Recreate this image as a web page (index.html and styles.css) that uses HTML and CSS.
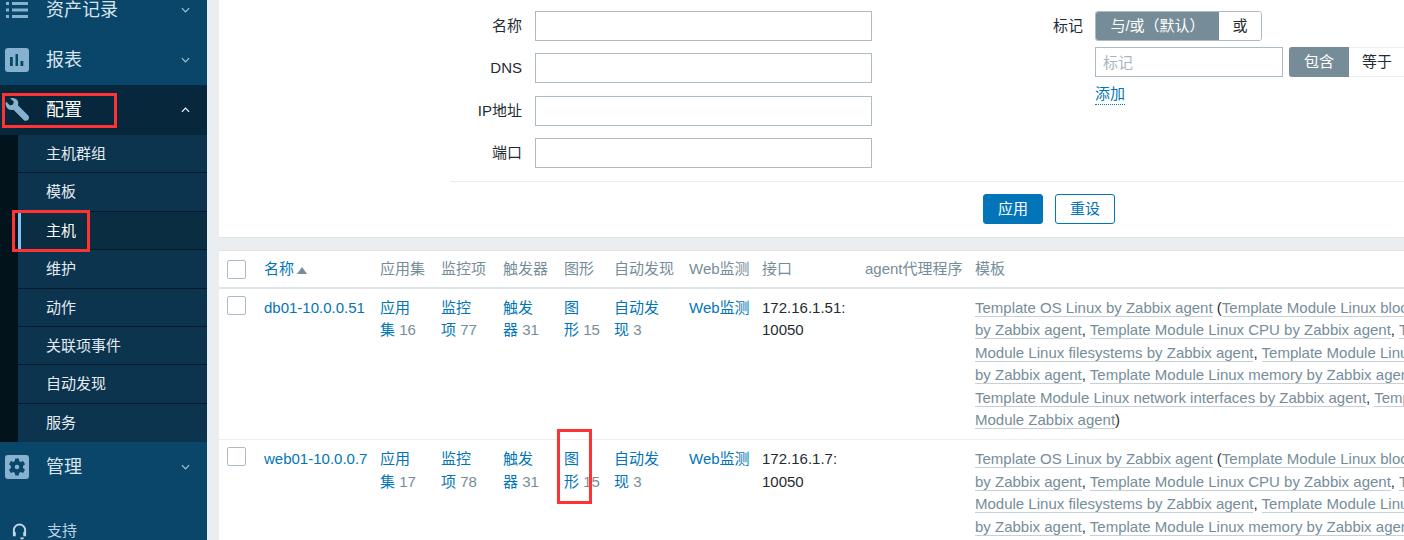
FILE: index.html
```html
<!DOCTYPE html>
<html lang="zh">
<head>
<meta charset="utf-8">
<title>主机</title>
<link rel="stylesheet" href="styles.css">
</head>
<body>
<div class="page">
  <nav class="side">
    <div class="nav-item">
      <svg class="ico" viewBox="0 0 24 24"><path d="M1 4h3v3H1zM1 10.500h3v3H1zM1 17h3v3H1zM7 4h16v3H7zM7 10.500h16v3H7zM7 17h16v3H7z"/></svg>
      <span class="nav-label">资产记录</span>
      <svg class="chev" viewBox="0 0 10 6"><path d="M1 1l4 4 4-4"/></svg>
    </div>
    <div class="nav-item">
      <svg class="ico" viewBox="0 0 24 24"><path fill-rule="evenodd" d="M3 0h18a3 3 0 0 1 3 3v18a3 3 0 0 1-3 3H3a3 3 0 0 1-3-3V3a3 3 0 0 1 3-3zM5 9v9h2.800V9zM10.500 6v12h2.500V6zM15.500 13v5h2.800v-5z"/></svg>
      <span class="nav-label">报表</span>
      <svg class="chev" viewBox="0 0 10 6"><path d="M1 1l4 4 4-4"/></svg>
    </div>
    <div class="nav-item nav-open">
      <svg class="ico" viewBox="0 0 24 24"><path d="M1 3.500 5 7.500 8 6.500 8.800 3.500 5 .5C8-.8 12 .5 13 3.500c.4 1.400.3 2.600-.1 3.700L23 17.300c1.400 1.400 1.200 3.200.2 4.400-1.200 1.300-3.200 1.500-4.500.2L8.500 11.700C6.800 12.400 4.800 12.200 3.200 11 1 9.500.2 6.200 1 3.500z"/></svg>
      <span class="nav-label">配置</span>
      <svg class="chev" viewBox="0 0 10 6"><path d="M1 5l4-4 4 4"/></svg>
    </div>
    <ul class="sub">
      <li>主机群组</li>
      <li>模板</li>
      <li class="sub-on">主机</li>
      <li>维护</li>
      <li>动作</li>
      <li>关联项事件</li>
      <li>自动发现</li>
      <li>服务</li>
    </ul>
    <div class="nav-item">
      <svg class="ico" viewBox="0 0 24 24"><path fill-rule="evenodd" d="M3 0h18a3 3 0 0 1 3 3v18a3 3 0 0 1-3 3H3a3 3 0 0 1-3-3V3a3 3 0 0 1 3-3zM10.300 3.500l-.5 2.600-1.400.8-2.500-.9L4 9.300l2 1.700v2l-2 1.700 1.900 3.300 2.500-.9 1.400.8.5 2.600h3.400l.5-2.600 1.400-.8 2.500.9L20 14.700 18 13v-2l2-1.700-1.900-3.300-2.500.9-1.400-.8-.5-2.600zM12 9.700a2.300 2.300 0 1 1 0 4.600 2.300 2.300 0 0 1 0-4.600z"/></svg>
      <span class="nav-label">管理</span>
      <svg class="chev" viewBox="0 0 10 6"><path d="M1 1l4 4 4-4"/></svg>
    </div>
    <div class="support">
      <svg class="headset" viewBox="0 0 16 18"><path d="M2 11V7.500a6 6 0 0 1 12 0V11"/><path class="solid" d="M1 9.500h3v4.500H1zM12 9.500h3v4.500h-3zM9 15.500h3.500v1.800H9z"/></svg>
      <span>支持</span>
    </div>
  </nav>

  <main class="main">
    <section class="filter">
      <div class="filter-cols">
        <div class="form-grid">
          <label class="f-label">名称</label><input class="f-input" type="text">
          <label class="f-label">DNS</label><input class="f-input" type="text">
          <label class="f-label">IP地址</label><input class="f-input" type="text">
          <label class="f-label">端口</label><input class="f-input" type="text">
        </div>
        <div class="tags">
          <span class="tag-label">标记</span>
          <div class="tag-ctl">
            <div class="seg seg-a"><span class="seg-on">与/或（默认）</span><span class="seg-off">或</span></div>
            <div class="tag-row">
              <input class="tag-input" type="text" placeholder="标记">
              <div class="seg seg-b"><span class="seg-on">包含</span><span class="seg-off">等于</span></div>
            </div>
            <a class="add">添加</a>
          </div>
        </div>
      </div>
      <div class="filter-foot">
        <button class="btn btn-main">应用</button>
        <button class="btn btn-alt">重设</button>
      </div>
    </section>

    <section class="list">
      <table class="hosts">
        <colgroup>
          <col class="c-chk"><col class="c-name"><col class="c-app"><col class="c-item"><col class="c-trg"><col class="c-gr"><col class="c-disc"><col class="c-web"><col class="c-if"><col class="c-proxy"><col class="c-tpl">
        </colgroup>
        <thead>
          <tr>
            <th><span class="chk"></span></th>
            <th><a>名称</a><i class="sort"></i></th>
            <th>应用集</th><th>监控项</th><th>触发器</th><th>图形</th><th>自动发现</th><th>Web监测</th><th>接口</th><th>agent代理程序</th><th>模板</th>
          </tr>
        </thead>
        <tbody>
          <tr>
            <td><span class="chk"></span></td>
            <td><a>db01-10.0.0.51</a></td>
            <td><a>应用集</a>&nbsp;<em>16</em></td>
            <td><a>监控项</a>&nbsp;<em>77</em></td>
            <td><a>触发器</a>&nbsp;<em>31</em></td>
            <td><a>图形</a>&nbsp;<em>15</em></td>
            <td><a>自动发现</a>&nbsp;<em>3</em></td>
            <td><a>Web监测</a></td>
            <td class="plain">172.16.1.51: 10050</td>
            <td></td>
            <td class="tpl"><u>Template OS Linux by Zabbix agent</u> (<u>Template Module Linux block devices</u><br><u>by Zabbix agent</u>, <u>Template Module Linux CPU by Zabbix agent</u>, <u>Template</u><br><u>Module Linux filesystems by Zabbix agent</u>, <u>Template Module Linux generic</u><br><u>by Zabbix agent</u>, <u>Template Module Linux memory by Zabbix agent</u>,<br><u>Template Module Linux network interfaces by Zabbix agent</u>, <u>Template</u><br><u>Module Zabbix agent</u>)</td>
          </tr>
          <tr>
            <td><span class="chk"></span></td>
            <td><a>web01-10.0.0.7</a></td>
            <td><a>应用集</a>&nbsp;<em>17</em></td>
            <td><a>监控项</a>&nbsp;<em>78</em></td>
            <td><a>触发器</a>&nbsp;<em>31</em></td>
            <td><a>图形</a>&nbsp;<em>15</em></td>
            <td><a>自动发现</a>&nbsp;<em>3</em></td>
            <td><a>Web监测</a></td>
            <td class="plain">172.16.1.7: 10050</td>
            <td></td>
            <td class="tpl"><u>Template OS Linux by Zabbix agent</u> (<u>Template Module Linux block devices</u><br><u>by Zabbix agent</u>, <u>Template Module Linux CPU by Zabbix agent</u>, <u>Template</u><br><u>Module Linux filesystems by Zabbix agent</u>, <u>Template Module Linux generic</u><br><u>by Zabbix agent</u>, <u>Template Module Linux memory by Zabbix agent</u>,</td>
          </tr>
        </tbody>
      </table>
    </section>
  </main>
</div>
<div class="mark mark-a"></div>
<div class="mark mark-b"></div>
<div class="mark mark-c"></div>
</body>
</html>
```

FILE: styles.css
```css
* { box-sizing: border-box; }
html, body { margin: 0; height: 540px; overflow: hidden; background: #ebeef0; }
body { position: relative; font: 15px/22.4px "Liberation Sans", "Noto Sans CJK SC", sans-serif; color: #1f2c33; }
.page { display: flex; margin-top: -15px; height: 555px; }

/* sidebar */
.side { flex: 0 0 207px; background: #0a466a; color: #d9e5ed; }
.nav-item { display: flex; align-items: center; height: 50px; padding-left: 5px; position: relative; }
.ico { width: 24px; height: 24px; flex: none; fill: #86b2d0; }
.nav-label { margin-left: 17px; font-size: 18px; }
.chev { position: absolute; left: 181px; top: 22px; width: 9px; height: 6px; fill: none; stroke: #a9c4d6; stroke-width: 1.300; }
.nav-open { background: #07283c; color: #fff; }
.nav-open .chev { stroke: #fff; }
.sub { list-style: none; margin: 0; padding: 0 0 0 18px; background: #0d344f; box-shadow: inset 18px 0 0 #03131c; color: #e3ecf2; }
.sub li { height: 38.375px; line-height: 37px; padding-left: 28px; border-bottom: 1px solid #04192b; }
.sub li:last-child { border-bottom: 0; }
.sub-on { background: #0a2d42; box-shadow: inset 3px 0 0 #7cc6f7; color: #fff; }
.support { display: flex; align-items: center; margin-top: 28px; padding-left: 12px; color: #bcd2e0; }
.support span { margin-left: 20px; }
.headset { width: 15px; height: 17px; fill: none; stroke: #c3d6e3; stroke-width: 2; }
.headset .solid { fill: #c3d6e3; stroke: none; }

/* main */
.main { flex: 0 0 1197px; margin-left: 12px; min-width: 0; overflow: hidden; }
.filter { background: #fff; border-bottom: 1px solid #dfe4e7; padding-top: 26px; height: 253px; }
.filter-cols { display: flex; }
.form-grid { display: grid; grid-template-columns: 303px 337px; column-gap: 13px; row-gap: 12.330px; flex: none; }
.f-label { text-align: right; line-height: 30px; }
.f-input { height: 30px; border: 1px solid #acbbc7; background: #fff; padding: 0 7px; font: inherit; }
.tags { display: flex; margin-left: 181px; gap: 12px; flex: none; }
.tag-label { line-height: 30px; width: 30px; }
.tag-ctl { display: flex; flex-direction: column; }
.seg { display: flex; height: 30px; line-height: 28px; border: 1px solid #acbbc7; border-radius: 3px; width: 167px; }
.seg-on { background: #768d99; color: #fff; text-align: center; }
.seg-off { text-align: center; background: #fff; }
.seg-a .seg-on { width: 123px; border-radius: 2px 0 0 2px; }
.seg-a .seg-off { flex: 1; border-radius: 0 2px 2px 0; }
.tag-row { display: flex; margin-top: 6px; gap: 6px; }
.tag-input { width: 188px; height: 30px; border: 1px solid #acbbc7; padding: 0 7px; font: inherit; }
.tag-input::placeholder { color: #a7b6c0; }
.seg-b { width: 120px; flex: none; border-color: #ebeef0; border-width: 1px 0 1px 0; }
.seg-b .seg-on { width: 60px; border-radius: 3px 0 0 3px; margin-top: -1px; height: 30px; line-height: 30px; }
.seg-b .seg-off { width: 56px; }
.add { align-self: flex-start; margin-top: 6px; color: #0275b8; line-height: 21px; border-bottom: 1px dotted #0275b8; }
.filter-foot { margin: 13px 0 0 231px; padding: 12px 0 0 533px; border-top: 1px solid #ebeef0; display: flex; gap: 12px; }
.btn { width: 60px; height: 30px; border-radius: 3px; font: inherit; padding: 0; }
.btn-main { background: #0275b8; border: 1px solid #0275b8; color: #fff; }
.btn-alt { background: #fff; border: 1px solid #0275b8; color: #0275b8; }

/* table */
.list { margin-top: 12px; background: #fff; border-top: 1px solid #dfe4e7; min-height: 300px; }
.hosts { border-collapse: collapse; table-layout: fixed; width: 1400px; }
.c-chk { width: 45px; } .c-name { width: 116px; } .c-app { width: 61px; } .c-item { width: 62px; } .c-trg { width: 61px; } .c-gr { width: 50px; } .c-disc { width: 75px; } .c-web { width: 73px; } .c-if { width: 103px; } .c-proxy { width: 110px; } .c-tpl { width: 644px; }
th, td { text-align: left; vertical-align: top; font-weight: normal; padding: 8px 10px 8px 0; }
th { color: #768d99; height: 37px; border-bottom: 2px solid #dfe4e7; white-space: nowrap; vertical-align: middle; padding: 1px 0 0; }
tbody tr { border-bottom: 1px solid #ebeef0; }
th:first-child, td:first-child { padding-left: 8px; }
th:first-child { padding-top: 0; }
td .chk { margin-top: -1px; }
.chk { display: block; width: 19px; height: 19px; border: 1px solid #acbbc7; border-radius: 2px; background: #fff; }
a { color: #0275b8; }
em { font-style: normal; color: #768d99; }
.sort { display: inline-block; margin-left: 3px; border: 5px solid transparent; border-top: 0; border-bottom: 7px solid #768d99; }
.plain { color: #1f2c33; }
.tpl { color: #1f2c33; padding-right: 0; white-space: nowrap; }
.tpl u { color: #768d99; text-decoration: none; border-bottom: 1px solid #c5d0d7; }

/* red annotation boxes */
.mark { position: absolute; border: 3px solid #f33; }
.mark-a { left: 2px; top: 93px; width: 115px; height: 35px; }
.mark-b { left: 12px; top: 210px; width: 78px; height: 42px; }
.mark-c { left: 557px; top: 429px; width: 35px; height: 75px; }
```
